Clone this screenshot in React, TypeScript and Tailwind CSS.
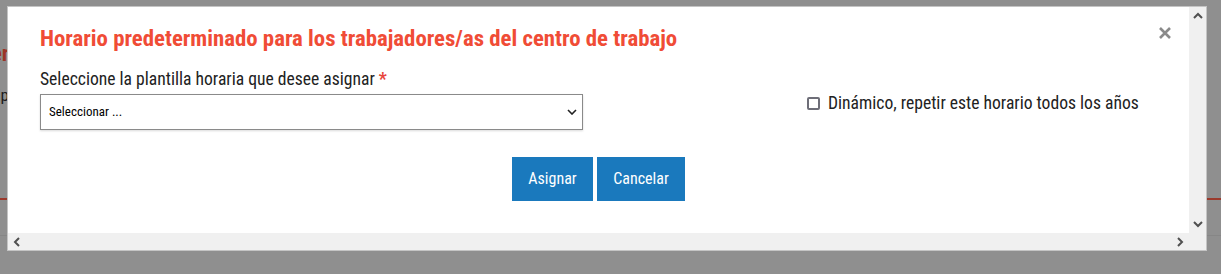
const font = { fontFamily: '"Roboto Condensed", "Liberation Sans Narrow", "DejaVu Sans Condensed", Roboto, sans-serif' };

function Chevron({ dir }: { dir: "up" | "down" | "left" | "right" }) {
  const d = {
    up: "M1 6 L5 2 L9 6",
    down: "M1 2 L5 6 L9 2",
    left: "M6 1 L2 5 L6 9",
    right: "M2 1 L6 5 L2 9",
  }[dir];
  const vert = dir === "up" || dir === "down";
  return (
    <svg width={vert ? 10 : 8} height={vert ? 8 : 10} viewBox={vert ? "0 0 10 8" : "0 0 8 10"}>
      <path d={d} fill="none" stroke="#505050" strokeWidth="2" />
    </svg>
  );
}

function BackgroundPage() {
  return (
    <div className="flex flex-col h-full" style={font}>
      <div className="h-[42px]" />
      <div className="flex justify-end w-[9px] h-[24px] whitespace-nowrap text-[22px] font-bold leading-[24px] text-[#9c3527]">
        Gener
      </div>
      <div className="h-[18px]" />
      <div className="flex justify-end w-[9px] h-[22px] whitespace-nowrap text-[17px] leading-[22px] text-[#1c1c1c]">
        Tip
      </div>
      <div className="h-[92px]" />
      <div className="h-[2px] bg-[#9b3a2c]" />
      <div className="h-[35px]" />
      <div className="h-[1px] bg-[#868686]" />
    </div>
  );
}

export default function App() {
  return (
    <div className="relative w-full h-[274px] bg-[#8f8f8f] overflow-hidden">
      <BackgroundPage />

      <div className="absolute left-[7px] top-[6px] w-[1200px] h-[245px] border border-[#c4c4c4] bg-[#f0f0f0] flex flex-col" style={font}>
        <div className="flex flex-1 min-h-0">
          <div className="flex-1 bg-white flex flex-col pl-[32px] pt-[18px]">
            <div className="flex items-start justify-between pr-[18px]">
              <h2 className="text-[22.8px] leading-[28px] font-bold text-[#f04c36] whitespace-nowrap">
                Horario predeterminado para los trabajadores/as del centro de trabajo
              </h2>
              <svg width="12" height="12" viewBox="0 0 12 12" className="mt-[2px]">
                <path d="M1 1 L11 11 M11 1 L1 11" stroke="#8a8a8a" strokeWidth="2.6" />
              </svg>
            </div>

            <div className="flex mt-[16px]">
              <div className="flex flex-col w-[543px]">
                <label className="text-[17.6px] leading-[20px] text-[#222] whitespace-nowrap">
                  Seleccione la plantilla horaria que desee asignar <span className="text-[#e8453c] font-bold">*</span>
                </label>
                <div className="mt-[5px] h-[36px] border border-[#8a8a8a] shadow-[0_1px_2px_rgba(0,0,0,0.15)] flex items-center justify-between pl-[8px] pr-[5px] bg-white">
                  <span className="text-[13px] text-black">Seleccionar ...</span>
                  <svg width="10" height="6" viewBox="0 0 10 6">
                    <path d="M1 1 L5 5 L9 1" fill="none" stroke="#222" strokeWidth="1.6" />
                  </svg>
                </div>
              </div>

              <div className="ml-[224px] mt-[24px] flex items-center gap-[8px] h-[20px]">
                <span className="w-[13px] h-[13px] border-2 border-[#6e6e78] rounded-[2px] bg-white" />
                <span className="text-[17.6px] leading-[20px] text-[#222] whitespace-nowrap">
                  Dinámico, repetir este horario todos los años
                </span>
              </div>
            </div>

            <div className="flex justify-center gap-[4px] mt-[27px] pr-[32px]">
              <button className="w-[81px] h-[44px] bg-[#1a79bd] text-white text-[16px]">Asignar</button>
              <button className="w-[88px] h-[44px] bg-[#1a79bd] text-white text-[16px]">Cancelar</button>
            </div>
          </div>

          <div className="w-[17px] flex flex-col items-center justify-between py-[5px]">
            <Chevron dir="up" />
            <Chevron dir="down" />
          </div>
        </div>

        <div className="h-[17px] flex items-center justify-between pl-[5px] pr-[22px]">
          <Chevron dir="left" />
          <Chevron dir="right" />
        </div>
      </div>
    </div>
  );
}
